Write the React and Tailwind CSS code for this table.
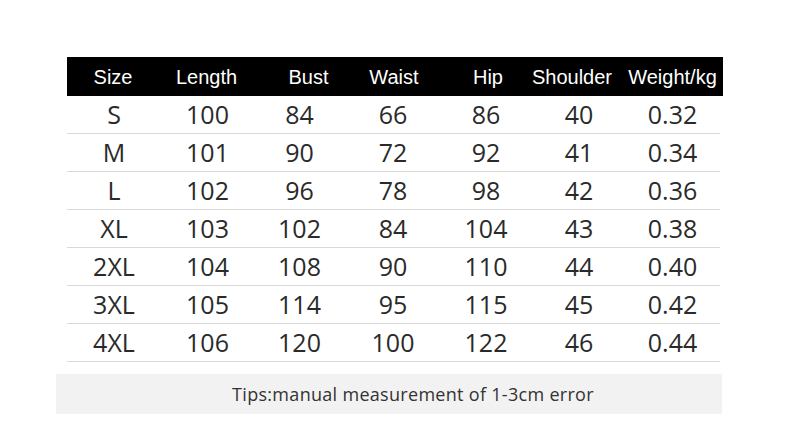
import React from "react";

const rows = [
  ["S", "100", "84", "66", "86", "40", "0.32"],
  ["M", "101", "90", "72", "92", "41", "0.34"],
  ["L", "102", "96", "78", "98", "42", "0.36"],
  ["XL", "103", "102", "84", "104", "43", "0.38"],
  ["2XL", "104", "108", "90", "110", "44", "0.40"],
  ["3XL", "105", "114", "95", "115", "45", "0.42"],
  ["4XL", "106", "120", "100", "122", "46", "0.44"],
];

const cols = "grid grid-cols-[94px_93px_91px_96px_90px_96px_91px]";

export default function App() {
  return (
    <div className="w-[790px] h-[424px] bg-white overflow-hidden flex flex-col">
      <div className="pt-[57px] pl-[67px] flex flex-col">
        <div
          className={`${cols} w-[656px] h-[39px] bg-black text-white text-[20px] items-center`}
          style={{ fontFamily: '"Liberation Sans", Arial, sans-serif' }}
        >
          <div className="flex justify-center whitespace-nowrap -translate-x-[1px]">Size</div>
          <div className="flex justify-center whitespace-nowrap -translate-x-[1px]">Length</div>
          <div className="flex justify-center whitespace-nowrap translate-x-[9px]">Bust</div>
          <div className="flex justify-center whitespace-nowrap translate-x-[1px]">Waist</div>
          <div className="flex justify-center whitespace-nowrap translate-x-[2px]">Hip</div>
          <div className="flex justify-center whitespace-nowrap -translate-x-[7px]">Shoulder</div>
          <div className="flex justify-center whitespace-nowrap">Weight/kg</div>
        </div>
        <div
          className="flex flex-col w-[653px] text-[25px] text-[#2a2a2a]"
          style={{ fontFamily: '"Open Sans", "Noto Sans", sans-serif' }}
        >
          {rows.map((r, i) => (
            <div key={i} className={`${cols} h-[38px] items-center border-b border-[#d9d9d9]`}>
              {r.map((c, j) => (
                <div key={j} className="flex justify-center whitespace-nowrap leading-none">
                  {c}
                </div>
              ))}
            </div>
          ))}
        </div>
      </div>
      <div
        className="ml-[56px] mt-[12px] w-[666px] h-[40px] pl-[48px] bg-[#f2f2f2] flex items-center justify-center text-[18px] tracking-[0.3px] text-[#333]"
        style={{ fontFamily: '"Open Sans", "Noto Sans", sans-serif' }}
      >
        Tips:manual measurement of 1-3cm error
      </div>
    </div>
  );
}
